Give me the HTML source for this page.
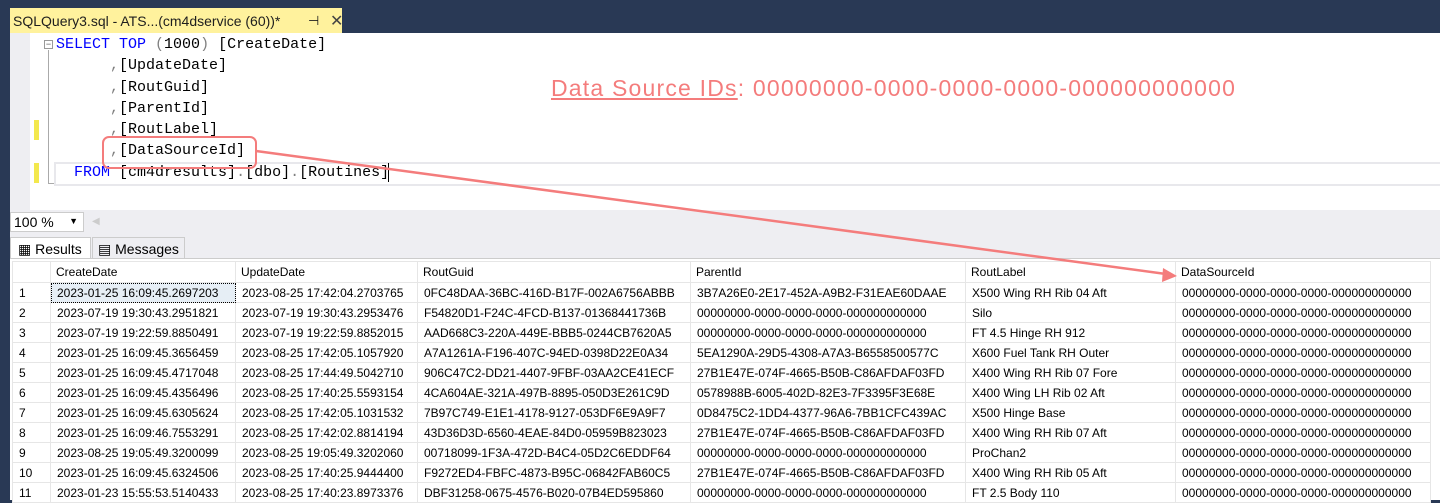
<!DOCTYPE html>
<html><head><meta charset="utf-8"><style>
*{margin:0;padding:0;box-sizing:border-box}
body{width:1440px;height:500px;overflow:hidden;background:#293955;position:relative;font-family:"Liberation Sans",sans-serif}
.tab{position:absolute;left:10px;top:8px;width:332px;height:26px;background:#fff29d;font-size:14px;color:#1e1e1e;padding:5px 0 0 3px;white-space:nowrap}
.tab .pin{position:absolute;left:298px;top:5px;font-size:13px}
.tab .x{position:absolute;left:320px;top:3px;font-size:16px;color:#444}
.editor{position:absolute;left:10px;top:33px;width:1430px;height:177px;background:#fff}
.gut{position:absolute;left:0;top:0;width:20px;height:177px;background:#eeeef2}
.code{position:absolute;font-family:"Liberation Mono",monospace;font-size:15px;color:#000;white-space:pre;line-height:21.3px}
.kw{color:#0000ff}.gr{color:#808080}
.mark{position:absolute;width:5px;height:20px;background:#f3e84d}
.zoom{position:absolute;left:10px;top:210px;width:1430px;height:52px;background:#eeeef2}
.zsel{position:absolute;left:10px;top:212px;width:74px;height:20px;background:#fff;border:1px solid #ccc;font-size:14px;padding:1px 3px}
.rt{position:absolute;top:237px;height:22px;font-size:14px;padding:3px 0 0 0;border:1px solid #ccc;border-bottom:none}
table{position:absolute;left:12px;top:261px;border-collapse:collapse;table-layout:fixed;background:#fff;font-size:12px;color:#000}
td{height:20px;border:1px solid #e6e6e6;padding:0 0 0 6px;white-space:nowrap;overflow:hidden}
tr.h td{height:21px;padding-left:5px}
</style></head><body>
<div class="tab">SQLQuery3.sql - ATS...(cm4dservice (60))*<span class="pin">⊣</span><span class="x">✕</span></div>
<div class="editor">
<div class="gut"></div>
<div style="position:absolute;left:34px;top:7px;width:9px;height:9px;border:1px solid #999;font-size:9px;line-height:7px;text-align:center;color:#555">−</div>
<div style="position:absolute;left:38px;top:17px;width:1px;height:133px;background:#aaa"></div>
<div style="position:absolute;left:38px;top:150px;width:6px;height:1px;background:#aaa"></div>
<div style="position:absolute;left:44px;top:129px;width:1390px;height:24px;border:2px solid #e8e8ec"></div>
<div class="mark" style="top:87px;left:24px"></div>
<div class="mark" style="top:130px;left:24px"></div>
<div class="code" style="left:46px;top:1px"><span class="kw">SELECT TOP</span> <span class="gr">(</span>1000<span class="gr">)</span> [CreateDate]
      <span class="gr">,</span>[UpdateDate]
      <span class="gr">,</span>[RoutGuid]
      <span class="gr">,</span>[ParentId]
      <span class="gr">,</span>[RoutLabel]
      <span class="gr">,</span>[DataSourceId]
  <span class="kw">FROM</span> [cm4dresults]<span class="gr">.</span>[dbo]<span class="gr">.</span>[Routines]</div>
<div style="position:absolute;left:378px;top:130px;width:1px;height:19px;background:#000"></div>
<div style="position:absolute;left:541px;top:42px;font-size:23px;letter-spacing:1.2px;color:#f47c7c;white-space:nowrap"><span style="text-decoration:underline">Data Source IDs</span>: 00000000-0000-0000-0000-000000000000</div>
</div>
<div class="zoom"></div>
<div class="zsel">100 %<span style="position:absolute;right:5px;top:3px;font-size:9px">▼</span></div>
<div style="position:absolute;left:92px;top:216px;font-size:10px;color:#ccc">◀</div>
<div class="rt" style="left:10px;width:81px;background:#fff;padding-left:7px">▦ Results</div>
<div class="rt" style="left:92px;width:93px;background:#eeeef2;padding-left:5px">▤ Messages</div>
<div style="position:absolute;left:10px;top:258px;width:1430px;height:242px;background:#fff;border-top:1px solid #ccc"></div>
<table>
<colgroup><col style="width:38px"><col style="width:185px"><col style="width:182px"><col style="width:273px"><col style="width:275px"><col style="width:210px"><col style="width:255px"></colgroup>
<tr class="h"><td></td><td>CreateDate</td><td>UpdateDate</td><td>RoutGuid</td><td>ParentId</td><td>RoutLabel</td><td>DataSourceId</td></tr>
<tr><td>1</td><td style="background:#e6eef5;outline:1px dotted #000;outline-offset:-1px">2023-01-25 16:09:45.2697203</td><td>2023-08-25 17:42:04.2703765</td><td>0FC48DAA-36BC-416D-B17F-002A6756ABBB</td><td>3B7A26E0-2E17-452A-A9B2-F31EAE60DAAE</td><td>X500 Wing RH Rib 04 Aft</td><td>00000000-0000-0000-0000-000000000000</td></tr>
<tr><td>2</td><td>2023-07-19 19:30:43.2951821</td><td>2023-07-19 19:30:43.2953476</td><td>F54820D1-F24C-4FCD-B137-01368441736B</td><td>00000000-0000-0000-0000-000000000000</td><td>Silo</td><td>00000000-0000-0000-0000-000000000000</td></tr>
<tr><td>3</td><td>2023-07-19 19:22:59.8850491</td><td>2023-07-19 19:22:59.8852015</td><td>AAD668C3-220A-449E-BBB5-0244CB7620A5</td><td>00000000-0000-0000-0000-000000000000</td><td>FT 4.5 Hinge RH 912</td><td>00000000-0000-0000-0000-000000000000</td></tr>
<tr><td>4</td><td>2023-01-25 16:09:45.3656459</td><td>2023-08-25 17:42:05.1057920</td><td>A7A1261A-F196-407C-94ED-0398D22E0A34</td><td>5EA1290A-29D5-4308-A7A3-B6558500577C</td><td>X600 Fuel Tank RH Outer</td><td>00000000-0000-0000-0000-000000000000</td></tr>
<tr><td>5</td><td>2023-01-25 16:09:45.4717048</td><td>2023-08-25 17:44:49.5042710</td><td>906C47C2-DD21-4407-9FBF-03AA2CE41ECF</td><td>27B1E47E-074F-4665-B50B-C86AFDAF03FD</td><td>X400 Wing RH Rib 07 Fore</td><td>00000000-0000-0000-0000-000000000000</td></tr>
<tr><td>6</td><td>2023-01-25 16:09:45.4356496</td><td>2023-08-25 17:40:25.5593154</td><td>4CA604AE-321A-497B-8895-050D3E261C9D</td><td>0578988B-6005-402D-82E3-7F3395F3E68E</td><td>X400 Wing LH Rib 02 Aft</td><td>00000000-0000-0000-0000-000000000000</td></tr>
<tr><td>7</td><td>2023-01-25 16:09:45.6305624</td><td>2023-08-25 17:42:05.1031532</td><td>7B97C749-E1E1-4178-9127-053DF6E9A9F7</td><td>0D8475C2-1DD4-4377-96A6-7BB1CFC439AC</td><td>X500 Hinge Base</td><td>00000000-0000-0000-0000-000000000000</td></tr>
<tr><td>8</td><td>2023-01-25 16:09:46.7553291</td><td>2023-08-25 17:42:02.8814194</td><td>43D36D3D-6560-4EAE-84D0-05959B823023</td><td>27B1E47E-074F-4665-B50B-C86AFDAF03FD</td><td>X400 Wing RH Rib 07 Aft</td><td>00000000-0000-0000-0000-000000000000</td></tr>
<tr><td>9</td><td>2023-08-25 19:05:49.3200099</td><td>2023-08-25 19:05:49.3202060</td><td>00718099-1F3A-472D-B4C4-05D2C6EDDF64</td><td>00000000-0000-0000-0000-000000000000</td><td>ProChan2</td><td>00000000-0000-0000-0000-000000000000</td></tr>
<tr><td>10</td><td>2023-01-25 16:09:45.6324506</td><td>2023-08-25 17:40:25.9444400</td><td>F9272ED4-FBFC-4873-B95C-06842FAB60C5</td><td>27B1E47E-074F-4665-B50B-C86AFDAF03FD</td><td>X400 Wing RH Rib 05 Aft</td><td>00000000-0000-0000-0000-000000000000</td></tr>
<tr><td>11</td><td>2023-01-23 15:55:53.5140433</td><td>2023-08-25 17:40:23.8973376</td><td>DBF31258-0675-4576-B020-07B4ED595860</td><td>00000000-0000-0000-0000-000000000000</td><td>FT 2.5 Body 110</td><td>00000000-0000-0000-0000-000000000000</td></tr>
</table>
<svg style="position:absolute;left:0;top:0" width="1440" height="500">
<rect x="103" y="137" width="153" height="31" rx="6" fill="none" stroke="#f47c7c" stroke-width="2"/>
<line x1="256" y1="151" x2="1166" y2="274" stroke="#f47c7c" stroke-width="2.5"/>
<polygon points="1177,276 1163,268 1162,282" fill="#f47c7c"/>
</svg>
</body></html>
